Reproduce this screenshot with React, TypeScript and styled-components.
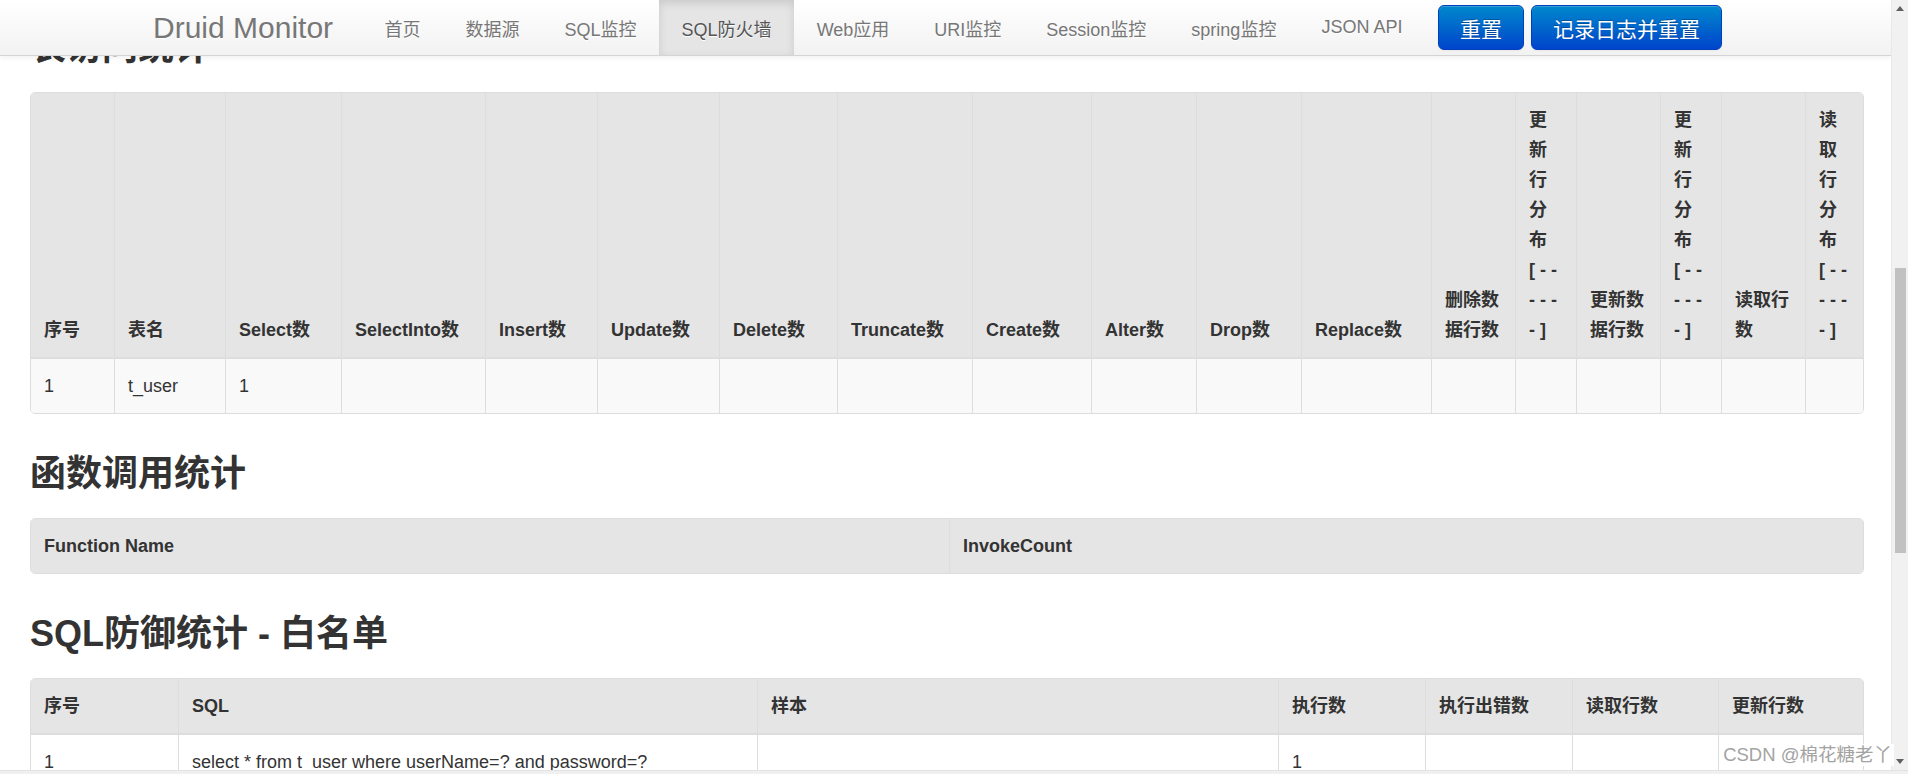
import React from 'react';
import styled, { createGlobalStyle, css } from 'styled-components';

const GlobalStyle = createGlobalStyle`
  html, body {
    margin: 0;
    padding: 0;
    overflow: hidden;
    background: #fff;
  }
  body {
    font-family: "Liberation Sans", Arial, "Noto Sans CJK SC", sans-serif;
    color: #333;
  }
  * {
    box-sizing: border-box;
  }
`;

const Screen = styled.div`
  position: relative;
  width: 1908px;
  height: 774px;
  display: flex;
  flex-direction: column;
  overflow: hidden;
`;

const Body = styled.div`
  flex: 1;
  min-height: 0;
  display: flex;
`;

const Viewport = styled.div`
  position: relative;
  flex: 1;
  overflow: hidden;
  background: #fff;
`;

/* fixed top navbar, it lies over the scrolled page */
const Navbar = styled.header`
  position: absolute;
  top: 0;
  left: 0;
  right: 0;
  z-index: 10;
  height: 56px;
  display: flex;
  align-items: stretch;
  padding-left: 153px;
  background: linear-gradient(to bottom, #ffffff, #f2f2f2);
  border-bottom: 1px solid #d4d4d4;
  box-shadow: 0 1px 6px rgba(0, 0, 0, 0.08);
`;

const Brand = styled.a`
  display: flex;
  align-items: center;
  margin-right: 29px;
  font-size: 30px;
  color: #777;
  text-shadow: 0 1px 0 #fff;
  white-space: nowrap;
`;

const NavList = styled.nav`
  display: flex;
  align-items: stretch;
`;

const NavItem = styled.a<{ $active?: boolean }>`
  display: flex;
  align-items: center;
  padding: 0 22.5px;
  font-size: 18px;
  color: #777;
  white-space: nowrap;
  text-shadow: 0 1px 0 #fff;
  ${(p) =>
    p.$active &&
    css`
      background: #e5e5e5;
      color: #555;
      box-shadow: inset 0 3px 8px rgba(0, 0, 0, 0.125);
    `}
`;

const ButtonGroup = styled.div`
  display: flex;
  align-items: center;
  gap: 7px;
  margin-left: 13px;
`;

const PrimaryButton = styled.button`
  height: 45px;
  padding: 0 21px;
  font-family: inherit;
  font-size: 21px;
  color: #fff;
  text-shadow: 0 -1px 0 rgba(0, 0, 0, 0.25);
  background: linear-gradient(to bottom, #0088cc, #0044cc);
  border: 1px solid #0040b8;
  border-radius: 6px;
  box-shadow: inset 0 1px 0 rgba(255, 255, 255, 0.2), 0 1px 2px rgba(0, 0, 0, 0.05);
  cursor: pointer;
`;

const Content = styled.main`
  padding: 28px 27px 0 30px;
`;

const SectionTitle = styled.h2`
  margin: 40px 0 24px;
  font-size: 36px;
  line-height: 40px;
  font-weight: bold;
  color: #333;
  &:first-child {
    margin-top: 0;
  }
`;

const TableFrame = styled.div`
  border: 1px solid #ddd;
  border-radius: 5px;
  overflow: hidden;
`;

const Table = styled.table`
  width: 100%;
  table-layout: fixed;
  border-collapse: separate;
  border-spacing: 0;
`;

const Col = styled.col<{ $w: number }>`
  width: ${(p) => p.$w}px;
`;

const HeadCell = styled.th`
  padding: 12px 13px;
  font-size: 18px;
  line-height: 30px;
  font-weight: bold;
  color: #333;
  text-align: left;
  vertical-align: bottom;
  background: #e5e5e5;
  border-left: 1px solid #ddd;
  &:first-child {
    border-left: 0;
  }
`;

const Row = styled.tr<{ $striped?: boolean }>`
  background: ${(p) => (p.$striped ? '#f9f9f9' : '#fff')};
`;

const Cell = styled.td`
  padding: 12px 13px;
  font-size: 18px;
  line-height: 30px;
  color: #333;
  text-align: left;
  vertical-align: top;
  white-space: nowrap;
  border-top: 2px solid #ddd;
  border-left: 1px solid #ddd;
  &:first-child {
    border-left: 0;
  }
`;

const Watermark = styled.span`
  position: absolute;
  right: 14px;
  bottom: 8px;
  z-index: 20;
  padding: 0 2px;
  font-size: 18.5px;
  line-height: 22px;
  color: #a3a3a3;
  background: rgba(255, 255, 255, 0.9);
  white-space: nowrap;
`;

const ScrollTrack = styled.div`
  width: 17px;
  display: flex;
  flex-direction: column;
  align-items: center;
  background: #f1f1f1;
  border-left: 1px solid #e9e9e9;
`;

const ArrowBox = styled.div`
  width: 17px;
  height: 17px;
  display: flex;
  align-items: center;
  justify-content: center;
`;

const Arrow = styled.span<{ $dir: 'up' | 'down' }>`
  width: 0;
  height: 0;
  border-left: 4px solid transparent;
  border-right: 4px solid transparent;
  ${(p) =>
    p.$dir === 'up'
      ? css`border-bottom: 5px solid #606060;`
      : css`border-top: 5px solid #606060;`}
`;

const Thumb = styled.div`
  width: 11px;
  height: 285px;
  margin-top: 251px;
  background: #c1c1c1;
`;

const TrackSpacer = styled.div`
  flex: 1;
`;

const BottomStrip = styled.div`
  height: 4px;
  background: #f0f0f0;
  border-top: 1px solid #e2e2e2;
`;

type TableSpec = {
  widths: number[];
  head: string[];
  rows: string[][];
  striped?: boolean;
};

const navItems = [
  '首页',
  '数据源',
  'SQL监控',
  'SQL防火墙',
  'Web应用',
  'URI监控',
  'Session监控',
  'spring监控',
  'JSON API',
];

// the dash scale wraps in groups inside the narrow columns
const NB = '\u00a0';
const scale = `[${NB}-${NB}- -${NB}-${NB}- -${NB}]`;

const tableStats: TableSpec = {
  widths: [83, 111, 116, 144, 112, 122, 118, 135, 119, 105, 105, 130, 84, 61, 84, 61, 84, 60],
  head: [
    '序号',
    '表名',
    'Select数',
    'SelectInto数',
    'Insert数',
    'Update数',
    'Delete数',
    'Truncate数',
    'Create数',
    'Alter数',
    'Drop数',
    'Replace数',
    '删除数据行数',
    `更新行分布${scale}`,
    '更新数据行数',
    `更新行分布${scale}`,
    '读取行数',
    `读取行分布${scale}`,
  ],
  rows: [['1', 't_user', '1', '', '', '', '', '', '', '', '', '', '', '', '', '', '', '']],
  striped: true,
};

const functionStats: TableSpec = {
  widths: [918, 916],
  head: ['Function Name', 'InvokeCount'],
  rows: [],
};

const whiteList: TableSpec = {
  widths: [147, 579, 521, 147, 147, 146, 147],
  head: ['序号', 'SQL', '样本', '执行数', '执行出错数', '读取行数', '更新行数'],
  rows: [['1', 'select * from t_user where userName=? and password=?', '', '1', '', '', '']],
};

const StatTable: React.FC<{ spec: TableSpec }> = ({ spec }) => (
  <TableFrame>
    <Table>
      <colgroup>
        {spec.widths.map((w, i) => (
          <Col key={i} $w={w} />
        ))}
      </colgroup>
      <thead>
        <tr>
          {spec.head.map((h, i) => (
            <HeadCell key={i}>{h}</HeadCell>
          ))}
        </tr>
      </thead>
      <tbody>
        {spec.rows.map((r, ri) => (
          <Row key={ri} $striped={spec.striped}>
            {r.map((c, ci) => (
              <Cell key={ci}>{c}</Cell>
            ))}
          </Row>
        ))}
      </tbody>
    </Table>
  </TableFrame>
);

const App: React.FC = () => {
  return (
    <>
      <GlobalStyle />
      <Screen>
        <Body>
          <Viewport>
            <Navbar>
              <Brand>Druid Monitor</Brand>
              <NavList>
                {navItems.map((item) => (
                  <NavItem key={item} $active={item === 'SQL防火墙'}>
                    {item}
                  </NavItem>
                ))}
              </NavList>
              <ButtonGroup>
                <PrimaryButton>重置</PrimaryButton>
                <PrimaryButton>记录日志并重置</PrimaryButton>
              </ButtonGroup>
            </Navbar>

            <Content>
              <SectionTitle>表访问统计</SectionTitle>
              <StatTable spec={tableStats} />

              <SectionTitle>函数调用统计</SectionTitle>
              <StatTable spec={functionStats} />

              <SectionTitle>SQL防御统计 - 白名单</SectionTitle>
              <StatTable spec={whiteList} />
            </Content>
          </Viewport>

          <ScrollTrack>
            <ArrowBox>
              <Arrow $dir="up" />
            </ArrowBox>
            <Thumb />
            <TrackSpacer />
            <ArrowBox>
              <Arrow $dir="down" />
            </ArrowBox>
          </ScrollTrack>
        </Body>
        <BottomStrip />
        <Watermark>CSDN @棉花糖老丫</Watermark>
      </Screen>
    </>
  );
};

export default App;
